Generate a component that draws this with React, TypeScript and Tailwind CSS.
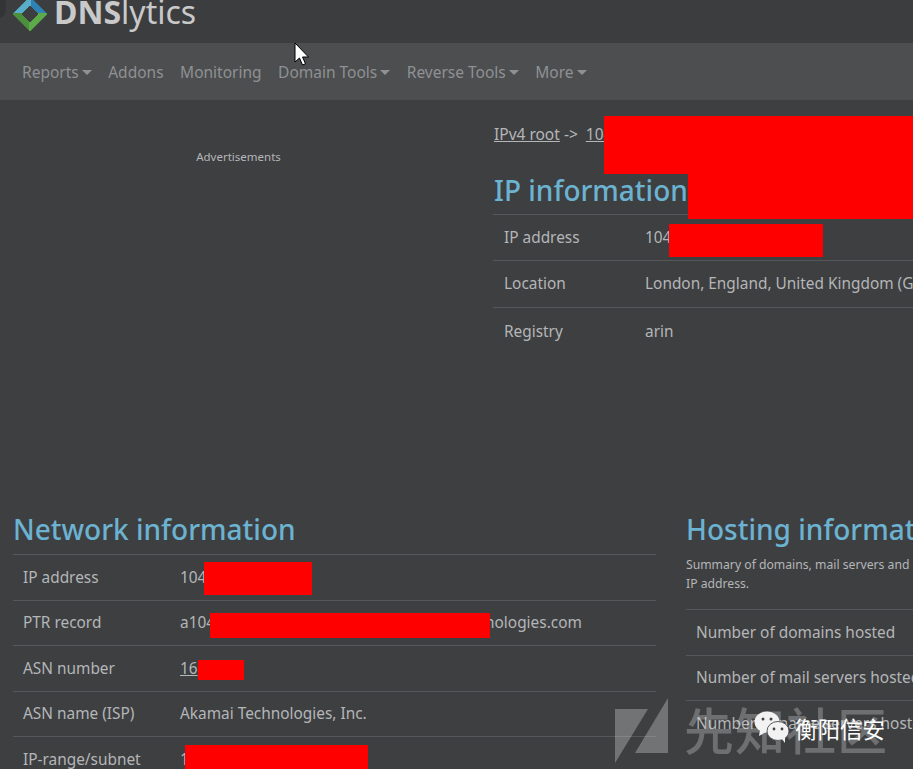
import React from 'react';

const sans = "font-['Noto_Sans',sans-serif]";

function Caret() {
  return <span className="ml-[3px] inline-block h-0 w-0 translate-y-[-3px] border-x-[5px] border-t-[5px] border-x-transparent border-t-[#8f9193]" />;
}

function NavItem({ label, caret }: { label: string; caret?: boolean }) {
  return (
    <a className="whitespace-nowrap">
      {label}
      {caret && <Caret />}
    </a>
  );
}

function Red({ className }: { className: string }) {
  return <span className={`absolute bg-[#ff0000] ${className}`} />;
}

function Logo() {
  return (
    <svg width="36" height="36" viewBox="0 0 36 36" className="mt-[-4px] shrink-0" strokeLinejoin="round">
      <path d="M18 2 L34 18 L26 18 L18 10 Z" fill="#2f82b4" stroke="#2f82b4" strokeWidth="2" />
      <path d="M18 2 L2 18 L10 18 L18 10 Z" fill="#58aecb" stroke="#58aecb" strokeWidth="2" />
      <path d="M2 18 L18 34 L18 26 L10 18 Z" fill="#4c8f3c" stroke="#4c8f3c" strokeWidth="2" />
      <path d="M34 18 L18 34 L18 26 L26 18 Z" fill="#5cab48" stroke="#5cab48" strokeWidth="2" />
      <path d="M18 10 L26 18 L18 26 L10 18 Z" fill="#3d3e40" stroke="#3d3e40" strokeWidth="1" />
    </svg>
  );
}

function Row({ label, className, labelWidth, children }: { label: string; className: string; labelWidth: string; children?: React.ReactNode }) {
  return (
    <div className={`flex items-center border-t border-[#55575a] text-[15.4px] text-[#b4b6b8] ${className}`}>
      <div className={`shrink-0 whitespace-nowrap ${labelWidth}`}>{label}</div>
      <div className="relative flex-1 whitespace-nowrap">{children}</div>
    </div>
  );
}

export default function App() {
  return (
    <div className={`relative h-[769px] w-[913px] overflow-hidden bg-[#3e3f41] ${sans}`}>
      {/* Top bar, logo is cut off by the screenshot */}
      <header className="relative flex h-[43px] items-start gap-[6px] overflow-hidden bg-[#3c3d3f] pl-[12px]">
        <span className="absolute left-[-10px] top-[-6px] h-[24px] w-[16px] rounded-full bg-[#333436]" />
        <Logo />
        <div className="mt-[-10px] text-[32px] leading-[44px] text-[#c9c9c9]">
          <span className="font-bold">DNS</span>lytics
        </div>
      </header>

      <nav className="flex h-[57px] items-center gap-[16.5px] bg-[#4c4e50] pl-[22px] pt-[2px] text-[15.5px] text-[#8f9193]">
        <NavItem label="Reports" caret />
        <NavItem label="Addons" />
        <NavItem label="Monitoring" />
        <NavItem label="Domain Tools" caret />
        <NavItem label="Reverse Tools" caret />
        <NavItem label="More" caret />
      </nav>

      <main className="flex h-[410px]">
        <div className="w-[493px] shrink-0 pt-[48px] text-center">
          <div className="ml-[-16px] text-[11.5px] text-[#b4b6b8]">Advertisements</div>
        </div>
        <section className="relative flex-1 pt-[23px]">
          <div className="whitespace-nowrap pl-px text-[15.5px] leading-[22px] text-[#b4b6b8]">
            <a className="underline">IPv4 root</a> -&gt; <a className="ml-[4px] underline">104</a>
          </div>
          <h3 className="mt-[26px] pl-px text-[28px] font-medium leading-[38px] text-[#6cb2d1]">IP information</h3>
          <div className="mt-[5px]">
            <Row label="IP address" labelWidth="w-[141px]" className="h-[46px] pl-[11px]">104<Red className="left-[24px] top-[-2px] h-[33px] w-[154px]" /></Row>
            <Row label="Location" labelWidth="w-[141px]" className="h-[47px] pl-[11px]">London, England, United Kingdom (GB)</Row>
            <Row label="Registry" labelWidth="w-[141px]" className="h-[48px] pl-[11px]">arin</Row>
          </div>
          <Red className="left-[111px] top-[16px] h-[58px] w-[309px]" />
          <Red className="left-[195px] top-[73px] h-[46px] w-[225px]" />
        </section>
      </main>

      <div className="flex pl-[13px]">
        <section className="w-[643px] shrink-0">
          <h3 className="text-[28px] font-medium leading-[38px] text-[#6cb2d1]">Network information</h3>
          <div className="mt-[6px]">
            <Row label="IP address" labelWidth="w-[157px]" className="h-[45.5px] pl-[10px]">104<Red className="left-[24px] top-[-4px] h-[33px] w-[108px]" /></Row>
            <Row label="PTR record" labelWidth="w-[157px]" className="h-[45.5px] pl-[10px]">
              a104<span className="ml-[270px]">nologies.com</span>
              <Red className="left-[30px] top-[2px] h-[25px] w-[280px]" />
            </Row>
            <Row label="ASN number" labelWidth="w-[157px]" className="h-[45.5px] pl-[10px]">
              <a className="underline">16</a>
              <Red className="left-[18px] top-[3px] h-[20px] w-[46px]" />
            </Row>
            <Row label="ASN name (ISP)" labelWidth="w-[157px]" className="h-[45.5px] pl-[10px]">Akamai Technologies, Inc.</Row>
            <Row label="IP-range/subnet" labelWidth="w-[157px]" className="h-[45.5px] pl-[10px]">
              1<Red className="left-[5px] top-[-3px] h-[32px] w-[183px]" />
            </Row>
          </div>
        </section>
        <section className="ml-[30px] w-[400px] shrink-0">
          <h3 className="whitespace-nowrap text-[28px] font-medium leading-[38px] text-[#6cb2d1]">Hosting information</h3>
          <p className="mt-[7px] w-[226px] text-[12.2px] leading-[19px] text-[#b4b6b8]">Summary of domains, mail servers and IP address.</p>
          <div className="mt-[16px]">
            <Row label="Number of domains hosted" labelWidth="w-[300px]" className="h-[45.5px] pl-[10px]" />
            <Row label="Number of mail servers hosted" labelWidth="w-[300px]" className="h-[45.5px] pl-[10px]" />
            <Row label="Number of name servers hosted" labelWidth="w-[300px]" className="h-[45.5px] pl-[10px]" />
          </div>
        </section>
      </div>

      {/* Mouse pointer */}
      <svg className="absolute left-[294px] top-[42px]" width="16" height="26" viewBox="0 0 16 26">
        <path d="M1 1 L1 20 L5.5 16 L8.5 23 L11.5 21.8 L8.5 15 L14.5 15 Z" fill="#fff" stroke="#000" strokeWidth="1" />
      </svg>

      {/* Watermarks */}
      <svg className="absolute left-[612px] top-[695px]" width="60" height="72" viewBox="0 0 60 72">
        <path d="M3 14 L36 14 L3 68 Z" fill="rgba(255,255,255,0.27)" />
        <path d="M56 3 L56 58 L23 58 Z" fill="rgba(255,255,255,0.27)" />
      </svg>
      <div className="absolute left-[684px] top-[696px] font-['Noto_Sans_CJK_SC',sans-serif] text-[50px] font-medium leading-[64px] tracking-[1px] text-white/25">先知社区</div>
      <svg className="absolute left-[753px] top-[710px]" width="38" height="34" viewBox="0 0 38 34">
        <ellipse cx="14" cy="12" rx="12.5" ry="10.5" fill="#f2f2f2" />
        <path d="M7 20 L6 26 L13 22 Z" fill="#f2f2f2" />
        <ellipse cx="25" cy="21" rx="11" ry="9.5" fill="#f2f2f2" stroke="#5a5b5c" strokeWidth="1" />
        <path d="M29 29 L32 33 L32 27 Z" fill="#f2f2f2" />
        <circle cx="10" cy="9" r="1.5" fill="#444" />
        <circle cx="18" cy="9" r="1.5" fill="#444" />
        <circle cx="21" cy="19" r="1.4" fill="#444" />
        <circle cx="29" cy="19" r="1.4" fill="#444" />
      </svg>
      <div className="absolute left-[795px] top-[712px] font-['Noto_Sans_CJK_SC',sans-serif] text-[22.5px] leading-[32px] text-white">衡阳信安</div>
    </div>
  );
}
